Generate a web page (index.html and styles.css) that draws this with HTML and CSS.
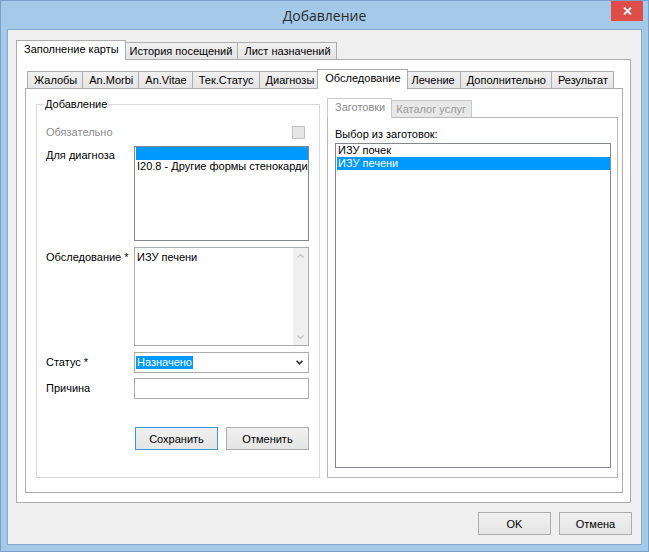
FILE: index.html
```html
<!DOCTYPE html>
<html lang="ru">
<head>
<meta charset="utf-8">
<title>Добавление</title>
<link rel="stylesheet" href="styles.css">
</head>
<body>
<div class="window">
  <header class="titlebar">
    <div class="title">Добавление</div>
    <div class="close"><svg width="9" height="8" viewBox="0 0 9 8"><path d="M1 0.5 L8 7.5 M8 0.5 L1 7.5" stroke="#fff" stroke-width="1.8" fill="none"/></svg></div>
  </header>
  <main class="client">
    <section class="tabctl outer">
      <div class="strip">
        <div class="tab sel">Заполнение карты</div>
        <div class="tab">История посещений</div>
        <div class="tab">Лист назначений</div>
      </div>
      <div class="page outer-page">
        <section class="tabctl inner">
          <div class="strip">
            <div class="tab">Жалобы</div>
            <div class="tab">An.Morbi</div>
            <div class="tab">An.Vitae</div>
            <div class="tab">Тек.Статус</div>
            <div class="tab">Диагнозы</div>
            <div class="tab sel">Обследование</div>
            <div class="tab">Лечение</div>
            <div class="tab">Дополнительно</div>
            <div class="tab">Результат</div>
          </div>
          <div class="page inner-page">
            <fieldset class="group">
              <legend>Добавление</legend>
              <div class="row r1">
                <span class="lbl disabled">Обязательно</span>
                <span class="check"></span>
              </div>
              <div class="row r2">
                <span class="lbl top">Для диагноза</span>
                <div class="listbox diag">
                  <div class="item selected"></div>
                  <div class="item">I20.8 - Другие формы стенокардии</div>
                </div>
              </div>
              <div class="row r3">
                <span class="lbl top2">Обследование *</span>
                <div class="memo">
                  <div class="memo-text">ИЗУ печени</div>
                  <div class="vscroll">
                    <span class="arrow"><svg width="7" height="4" viewBox="0 0 7 4"><path d="M0.5 3.5 L3.5 0.5 L6.5 3.5" stroke="#c4c4c4" stroke-width="1.2" fill="none"/></svg></span>
                    <span class="arrow"><svg width="7" height="4" viewBox="0 0 7 4"><path d="M0.5 0.5 L3.5 3.5 L6.5 0.5" stroke="#c4c4c4" stroke-width="1.2" fill="none"/></svg></span>
                  </div>
                </div>
              </div>
              <div class="row r4">
                <span class="lbl">Статус *</span>
                <div class="combo">
                  <span class="hl">Назначено</span>
                  <svg class="drop" width="7" height="5" viewBox="0 0 7 5"><path d="M0.6 0.8 L3.5 3.8 L6.4 0.8" stroke="#2b2b2b" stroke-width="1.6" fill="none"/></svg>
                </div>
              </div>
              <div class="row r5">
                <span class="lbl">Причина</span>
                <div class="edit"></div>
              </div>
              <div class="row r6">
                <span></span>
                <div class="btnrow">
                  <button class="btn default">Сохранить</button>
                  <button class="btn">Отменить</button>
                </div>
              </div>
            </fieldset>
            <section class="tabctl sub">
              <div class="strip">
                <div class="tab sel">Заготовки</div>
                <div class="tab">Каталог услуг</div>
              </div>
              <div class="page sub-page">
                <div class="caption">Выбор из заготовок:</div>
                <div class="listbox presets">
                  <div class="item">ИЗУ почек</div>
                  <div class="item selected">ИЗУ печени</div>
                </div>
              </div>
            </section>
          </div>
        </section>
      </div>
    </section>
    <div class="dlg-buttons">
      <button class="btn dlg">OK</button>
      <button class="btn dlg">Отмена</button>
    </div>
  </main>
</div>
</body>
</html>
```

FILE: styles.css
```css
html, body {
  margin: 0;
  padding: 0;
  background: #a5c9e9;
  overflow: hidden;
}

body {
  font-family: "Liberation Sans", Arial, sans-serif;
  font-size: 11px;
  color: #000;
}

.window {
  width: 649px;
  height: 552px;
  box-sizing: border-box;
  border: 1px solid #7aa0c8;
  background: #a5c9e9;
  display: flex;
  flex-direction: column;
}

.titlebar {
  height: 28px;
  flex: none;
  display: grid;
  grid-template-columns: 1fr auto 1fr;
}

.title {
  grid-column: 2;
  align-self: center;
  font-family: "Open Sans", "Noto Sans", sans-serif;
  font-size: 14px;
  color: #2a2a2a;
  line-height: 18px;
  padding-top: 1px;
}

.close {
  grid-column: 3;
  justify-self: end;
  align-self: start;
  width: 32px;
  height: 20px;
  margin-right: 5px;
  background: #e04c48;
  display: flex;
  align-items: center;
  justify-content: center;
}

.client {
  flex: 1;
  margin: 0 6px 6px;
  border: 1px solid #86a9cd;
  background: #f0f0f0;
  padding: 10px 9px 9px 8px;
  display: flex;
  flex-direction: column;
  min-height: 0;
}

/* ---- tab controls ---- */
.tabctl {
  display: flex;
  flex-direction: column;
  min-height: 0;
}

.tabctl.outer {
  flex: 1;
  margin-right: 1px;
}

.tabctl.inner {
  flex: 1;
}

.strip {
  display: flex;
  align-items: flex-end;
  height: 19px;
  padding-left: 2px;
  flex: none;
}

.tab {
  height: 17px;
  box-sizing: border-box;
  border: 1px solid #acacac;
  border-bottom: 0;
  background: linear-gradient(#f0f0f0, #e5e5e5);
  padding: 0 5px 0 6px;
  line-height: 16px;
  white-space: nowrap;
  position: relative;
}

.tab + .tab {
  margin-left: -1px;
}

.tab.sel {
  height: 20px;
  background: #fff;
  padding: 0 6px 0 7px;
  margin: 0 -2px -1px -2px;
  z-index: 1;
}

.tab + .tab.sel {
  margin-left: -3px;
}

.page {
  border: 1px solid #acacac;
  background: #fff;
  flex: 1;
  min-height: 0;
}

.outer-page {
  padding: 9px 7px 9px 8px;
  display: flex;
  flex-direction: column;
}

.inner-page {
  display: grid;
  grid-template-columns: 284px 291px;
  column-gap: 7px;
  padding: 9px 4px 14px 10px;
}

/* ---- group box ---- */
.group {
  margin: 0;
  padding: 0 10px 27px 9px;
  border: 1px solid #d9d9d9;
  min-width: 0;
}

.group legend {
  padding: 0 1px;
  margin-left: -2px;
  line-height: 13px;
}

.row {
  display: grid;
  grid-template-columns: 88px 175px;
}

.r1 { margin-top: 15px; height: 13px; }
.r2 { margin-top: 7px; height: 95px; }
.r3 { margin-top: 6px; height: 99px; }
.r4 { margin-top: 6px; height: 21px; }
.r5 { margin-top: 5px; height: 21px; }
.r6 { margin-top: 28px; height: 23px; }

.lbl {
  line-height: 13px;
  align-self: center;
  white-space: nowrap;
}

.lbl.top {
  align-self: start;
  padding-top: 3px;
}

.lbl.top2 {
  align-self: start;
  padding-top: 4px;
}

.lbl.disabled {
  color: #8d8d8d;
}

.check {
  justify-self: end;
  align-self: center;
  width: 13px;
  height: 13px;
  box-sizing: border-box;
  margin-right: 4px;
  border: 1px solid #c2c2c2;
  background: #e6e6e6;
}

.listbox {
  box-sizing: border-box;
  border: 1px solid #828790;
  background: #fff;
  overflow: hidden;
  padding-left: 1px;
}

.item {
  height: 13px;
  line-height: 13px;
  padding-left: 1px;
  white-space: nowrap;
  overflow: hidden;
}

.item.selected {
  background: #0099ff;
  color: #fff;
}

.memo {
  box-sizing: border-box;
  border: 1px solid #abadb3;
  background: #fff;
  display: flex;
}

.memo-text {
  flex: 1;
  padding: 3px 2px;
  line-height: 13px;
}

.vscroll {
  width: 15px;
  background: #f0f0f0;
  display: flex;
  flex-direction: column;
  justify-content: space-between;
}

.arrow {
  height: 16px;
  display: flex;
  align-items: center;
  justify-content: center;
}

.combo {
  box-sizing: border-box;
  border: 1px solid #acacac;
  background: #fff;
  display: flex;
  align-items: center;
  padding: 0 5px 0 1px;
}

.hl {
  background: #0099ff;
  color: #fff;
  line-height: 13px;
  padding: 0 1px;
}

.drop {
  margin-left: auto;
}

.edit {
  box-sizing: border-box;
  border: 1px solid #abadb3;
  background: #fff;
}

.btnrow {
  display: flex;
  justify-content: flex-end;
  gap: 8px;
}

.btn {
  width: 83px;
  height: 23px;
  box-sizing: border-box;
  border: 1px solid #acacac;
  background: linear-gradient(#f0f0f0, #e5e5e5);
  font-family: "Liberation Sans", Arial, sans-serif;
  font-size: 11px;
  color: #000;
  padding: 0;
  margin: 0;
}

.btn.default {
  border-color: #3d95e0;
}

/* ---- sub tab control (disabled look) ---- */
.sub .tab {
  border-color: #c9c9c9;
  color: #9a9a9a;
  background: #e8e8e8;
}

.sub .tab.sel {
  background: #fff;
  color: #8a8a8a;
}

.sub-page {
  border-color: #b9b9b9;
  padding: 10px 6px 9px 7px;
  display: flex;
  flex-direction: column;
}

.caption {
  line-height: 13px;
  margin-bottom: 2px;
}

.presets {
  flex: 1;
}

/* ---- dialog buttons ---- */
.dlg-buttons {
  display: flex;
  justify-content: flex-end;
  gap: 8px;
  margin-top: 9px;
  flex: none;
}

.btn.dlg {
  width: 73px;
}
```
